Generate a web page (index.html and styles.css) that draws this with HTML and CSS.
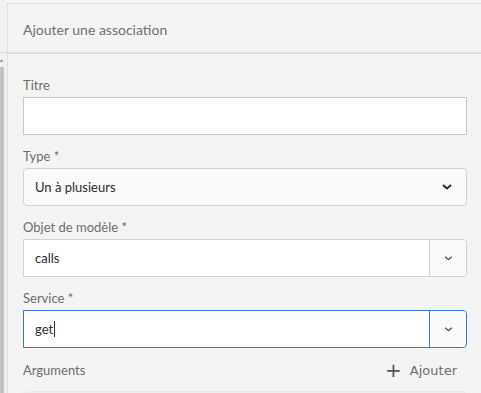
FILE: index.html
```html
<!DOCTYPE html>
<html lang="fr">
<head>
    <meta charset="UTF-8">
    <title>Ajouter une association</title>
    <link rel="stylesheet" href="styles.css">
</head>
<body>
    <div class="rail">
        <div class="rail-top"></div>
        <div class="rail-arrow">&#9652;</div>
        <div class="rail-thumb"></div>
    </div>
    <div class="panel">
        <header class="panel-header">Ajouter une association</header>
        <div class="panel-body">
            <div class="field">
                <label>Titre</label>
                <input class="textbox" type="text">
            </div>
            <div class="field">
                <label>Type *</label>
                <div class="select">
                    <span>Un à plusieurs</span>
                    <svg class="chevron" viewBox="0 0 10 6" width="10" height="6"><path d="M1 1l4 3.5L9 1" fill="none" stroke="#2c2c2c" stroke-width="2"/></svg>
                </div>
            </div>
            <div class="field">
                <label>Objet de modèle *</label>
                <div class="combo">
                    <div class="combo-input">calls</div>
                    <div class="combo-btn">
                        <svg viewBox="0 0 10 6" width="9" height="5"><path d="M1 1l4 3.5L9 1" fill="none" stroke="#4b4b4b" stroke-width="1.5"/></svg>
                    </div>
                </div>
            </div>
            <div class="field">
                <label>Service *</label>
                <div class="combo focused">
                    <div class="combo-input">get<span class="caret"></span></div>
                    <div class="combo-btn">
                        <svg viewBox="0 0 10 6" width="9" height="5"><path d="M1 1l4 3.5L9 1" fill="none" stroke="#4b4b4b" stroke-width="1.5"/></svg>
                    </div>
                </div>
            </div>
            <div class="args-row">
                <label>Arguments</label>
                <button class="add-btn"><span class="plus">+</span> Ajouter</button>
            </div>
            <div class="args-box"></div>
        </div>
    </div>
</body>
</html>
```

FILE: styles.css
```css
html, body {
    margin: 0;
    padding: 0;
    height: 100%;
    overflow: hidden;
}
body {
    display: flex;
    background-color: #f4f4f4;
    font-family: Lato, "Open Sans", sans-serif;
    color: #4b4b4b;
}
.rail {
    width: 7px;
    flex: none;
    background-color: #f0f0f0;
    display: flex;
    flex-direction: column;
}
.rail-top {
    height: 52px;
    border-bottom: 1px solid #dcdcdc;
    background-color: #f2f2f2;
}
.rail-arrow {
    font-size: 6px;
    line-height: 14px;
    color: #8a8a8a;
}
.rail-thumb {
    width: 4px;
    flex: 1;
    background-color: #c2c2c2;
}
.panel {
    flex: 1;
    margin-top: 3px;
    border-top: 1px solid #e0e0e0;
    border-left: 1px solid #e0e0e0;
    background-color: #f4f4f4;
}
.panel-header {
    height: 48px;
    padding-left: 15px;
    line-height: 52px;
    font-size: 14px;
    color: #707070;
    border-bottom: 2px solid #e2e2e2;
}
.panel-body {
    padding: 22px 14px 0 15px;
}
.field {
    margin-bottom: 12px;
}
.field label,
.args-row label {
    display: block;
    font-size: 13px;
    line-height: 18px;
    margin-bottom: 3px;
    color: #6e6e6e;
}
.textbox {
    display: block;
    box-sizing: border-box;
    width: 100%;
    height: 38px;
    margin: 0;
    border: 1px solid #cacaca;
    background-color: #fff;
}
.select {
    box-sizing: border-box;
    height: 38px;
    display: flex;
    align-items: center;
    justify-content: space-between;
    padding: 0 14px 0 11px;
    border: 1px solid #d2d2d2;
    border-radius: 4px;
    background-color: #fafafa;
    font-size: 13px;
    color: #2c2c2c;
}
.combo {
    box-sizing: border-box;
    height: 38px;
    display: flex;
    border: 1px solid #d2d2d2;
    border-radius: 0 4px 4px 0;
    background-color: #fff;
}
.combo-input {
    flex: 1;
    display: flex;
    align-items: center;
    padding-left: 11px;
    font-size: 13px;
    color: #2c2c2c;
}
.combo-btn {
    width: 36px;
    display: flex;
    align-items: center;
    justify-content: center;
    border-left: 1px solid #d2d2d2;
    border-radius: 0 4px 4px 0;
    background-color: #fafafa;
}
.combo.focused {
    border-color: #3b73cf;
}
.combo.focused .combo-btn {
    border-left-color: #3b73cf;
}
.caret {
    display: inline-block;
    width: 1px;
    height: 16px;
    margin-left: 1px;
    background-color: #2c2c2c;
}
.args-row {
    display: flex;
    justify-content: space-between;
    align-items: center;
    margin-top: -2px;
}
.args-row label {
    margin: 0;
}
.add-btn {
    border: 0;
    background: none;
    padding: 0 10px 0 0;
    font-family: "DejaVu Sans", sans-serif;
    font-size: 13px;
    color: #6e6e6e;
}
.plus {
    font-size: 20px;
    vertical-align: -2px;
    margin-right: 4px;
    color: #555;
}
.args-box {
    margin-top: 9px;
    height: 20px;
    border-radius: 4px;
    background-color: #ececec;
}
```
